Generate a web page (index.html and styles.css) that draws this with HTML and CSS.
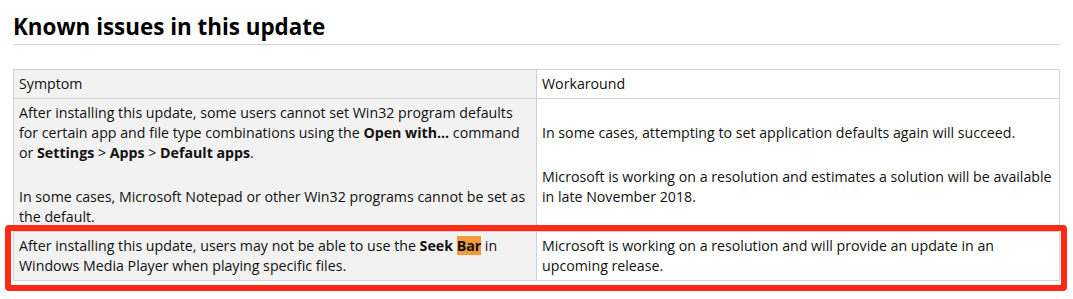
FILE: index.html
```html
<!DOCTYPE html>
<html>
<head>
<meta charset="utf-8">
<link rel="stylesheet" href="styles.css">
</head>
<body>
<div class="page">
  <h2 class="title">Known issues in this update</h2>
  <div class="table-wrap">
    <table class="issues">
      <tr>
        <td class="sym">Symptom</td>
        <td class="work">Workaround</td>
      </tr>
      <tr>
        <td class="sym">
          <p>After installing this update, some users cannot set Win32 program defaults for certain app and file type combinations using the <b>Open with...</b> command or <b>Settings</b> &gt; <b>Apps</b> &gt; <b>Default apps</b>.</p>
          <p>In some cases, Microsoft Notepad or other Win32 programs cannot be set as the default.</p>
        </td>
        <td class="work mid">
          <p>In some cases, attempting to set application defaults again will succeed.</p>
          <p>Microsoft is working on a resolution and estimates a solution will be available in late November 2018.</p>
        </td>
      </tr>
      <tr>
        <td class="sym">After installing this update, users may not be able to use the <b>Seek <span class="hl">Bar</span></b> in Windows Media Player when playing specific files.</td>
        <td class="work">Microsoft is working on a resolution and will provide an update in an upcoming release.</td>
      </tr>
    </table>
    <div class="mark"></div>
  </div>
</div>
</body>
</html>
```
FILE: styles.css
```css
html, body {
  margin: 0;
  padding: 0;
  background: #fff;
}
.page {
  padding: 0 13px 20px;
  min-height: 279px;
  font-family: "Open Sans", "Noto Sans", sans-serif;
  color: #111;
}
.title {
  margin: 0;
  padding-top: 13px;
  font-size: 22.4px;
  line-height: 28px;
  font-weight: 700;
  color: #000;
  border-bottom: 1px solid #d4d4d4;
  padding-bottom: 3px;
}
.table-wrap {
  position: relative;
  margin-top: 24px;
}
.issues {
  width: 100%;
  border-collapse: collapse;
  table-layout: fixed;
  font-size: 14.2px;
  line-height: 20px;
}
.issues td {
  border: 1px solid #d3d3d3;
  padding: 4px 5px;
  vertical-align: top;
  width: 50%;
}
.issues td.sym {
  background: #f2f2f2;
}
.issues td.work {
  background: #fff;
}
.issues td.mid {
  vertical-align: middle;
}
.issues p {
  margin: 0;
}
.issues p + p {
  margin-top: 24px;
}
.hl {
  background: #f29a3c;
}
.mark {
  position: absolute;
  left: -8px;
  right: -7px;
  bottom: -10px;
  height: 54px;
  border: 6px solid #fc2a14;
  border-radius: 4px;
}
```
